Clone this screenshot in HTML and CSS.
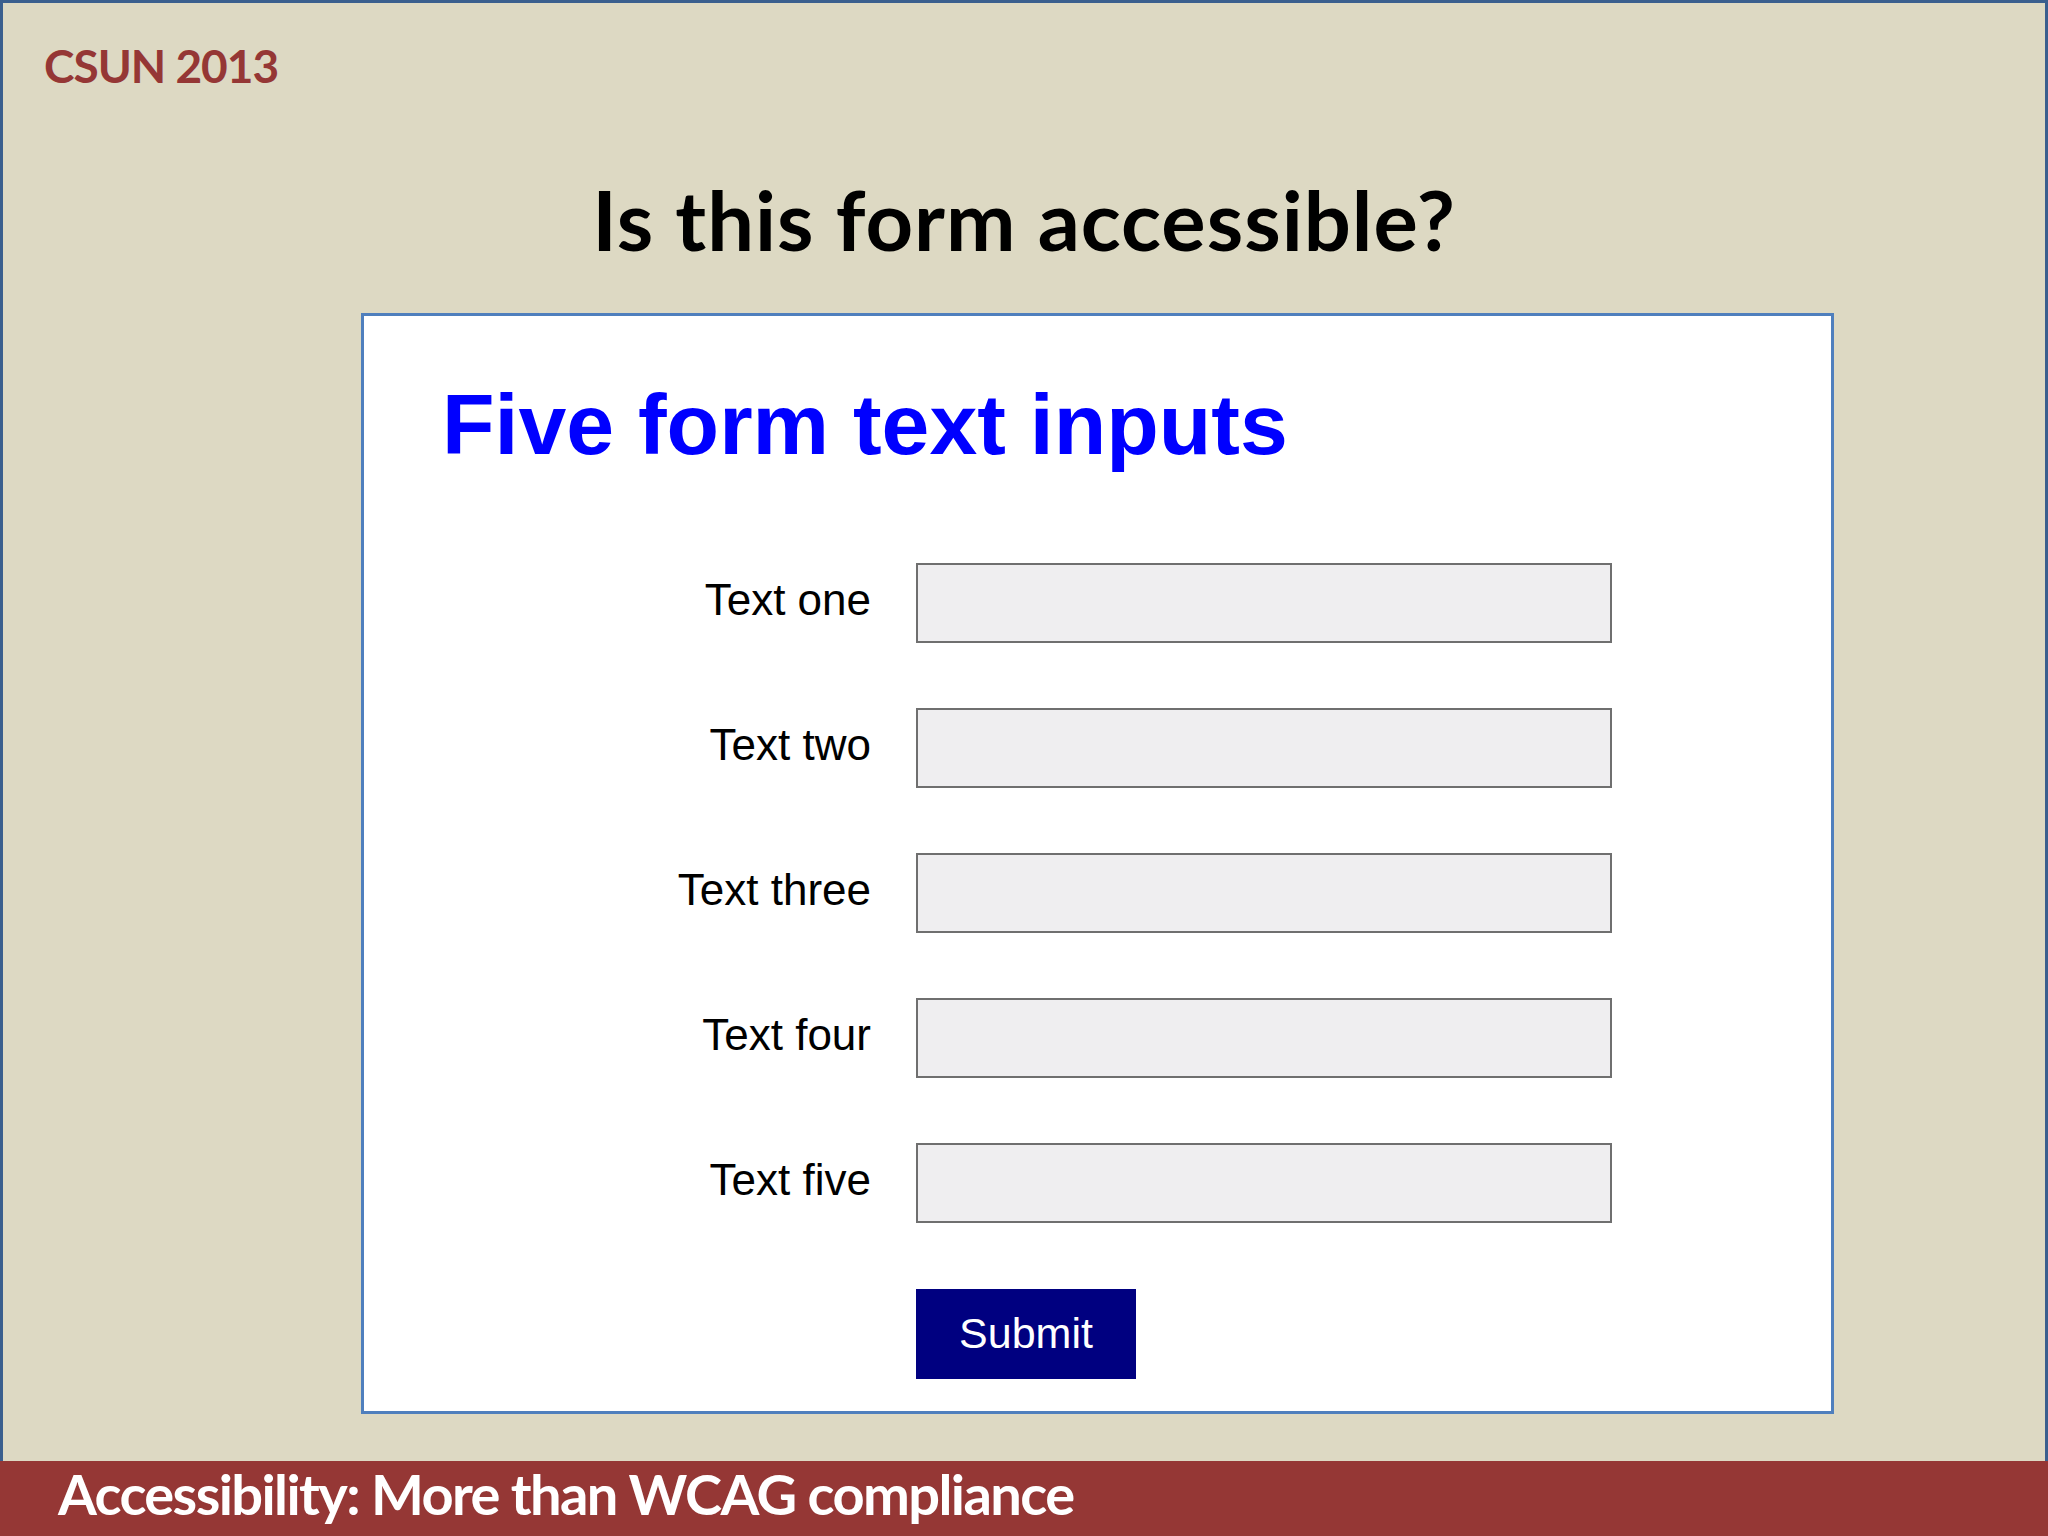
FILE: index.html
```html
<!DOCTYPE html>
<html lang="en">
<head>
<meta charset="utf-8">
<title>Is this form accessible?</title>
<link rel="stylesheet" href="styles.css">
</head>
<body>
<div class="page">
  <div class="frame">
    <div class="brand">CSUN 2013</div>
    <h1 class="title">Is this form accessible?</h1>
    <div class="panel">
      <h2 class="panel-heading">Five form text inputs</h2>
      <form class="form">
        <span class="label">Text one</span><input class="field" type="text">
        <span class="label">Text two</span><input class="field" type="text">
        <span class="label">Text three</span><input class="field" type="text">
        <span class="label">Text four</span><input class="field" type="text">
        <span class="label">Text five</span><input class="field" type="text">
        <span class="spacer"></span><button class="submit" type="button">Submit</button>
      </form>
    </div>
  </div>
  <footer class="bar">Accessibility: More than WCAG compliance</footer>
</div>
</body>
</html>
```

FILE: styles.css
```css
* { box-sizing: border-box; }
html, body { margin: 0; padding: 0; }
body { width: 2048px; height: 1536px; overflow: hidden; background: #ddd9c3; }

.page { width: 2048px; height: 1536px; display: flex; flex-direction: column; }

.frame {
  height: 1461px;
  background: #ddd9c3;
  border: 3px solid #3a5f8e;
  border-bottom: none;
  display: flex;
  flex-direction: column;
}

.brand {
  margin: 40px 0 0 41px;
  font-family: Lato, "Open Sans", sans-serif;
  font-weight: 700;
  font-size: 46px;
  line-height: 46px;
  letter-spacing: -1px;
  color: #953735;
}

.title {
  margin: 89px 0 0 0;
  text-align: center;
  font-family: Lato, "Open Sans", sans-serif;
  font-weight: 700;
  font-size: 83px;
  line-height: 83px;
  letter-spacing: 1px;
  color: #000;
}

.panel {
  margin: 52px 0 0 358px;
  width: 1473px;
  height: 1101px;
  background: #fff;
  border: 3px solid #4f7fbd;
  display: flex;
  flex-direction: column;
}

.panel-heading {
  margin: 65px 0 0 78px;
  font-family: "Liberation Sans", Arial, sans-serif;
  font-weight: 700;
  font-size: 86px;
  line-height: 86px;
  color: #0000ff;
}

.form {
  margin: 96px 0 0 0;
  display: grid;
  grid-template-columns: 507px 696px;
  column-gap: 45px;
  row-gap: 65px;
  align-items: center;
}

.label {
  text-align: right;
  font-family: "Liberation Sans", Arial, sans-serif;
  font-size: 44px;
  color: #000;
  padding-bottom: 6px;
}

.field {
  display: block;
  width: 696px;
  height: 80px;
  margin: 0;
  background: #efeef0;
  border: 2px solid #6f6f6f;
  border-radius: 0;
}

.submit {
  margin: 1px 0 0 0;
  width: 220px;
  height: 90px;
  background: #000080;
  color: #fff;
  border: none;
  border-radius: 0;
  font-family: "Liberation Sans", Arial, sans-serif;
  font-size: 43px;
  padding: 0 0 2px 0;
}

.bar {
  height: 75px;
  background: #953735;
  color: #fff;
  font-family: Lato, "Open Sans", sans-serif;
  font-weight: 700;
  font-size: 56px;
  line-height: 65px;
  letter-spacing: -1.6px;
  padding: 0 0 10px 58px;
}
```
